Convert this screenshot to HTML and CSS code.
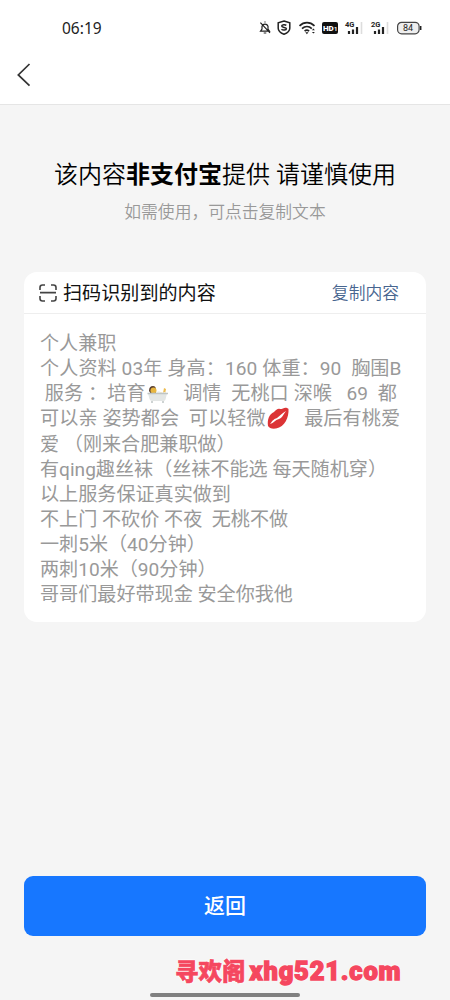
FILE: index.html
```html
<!DOCTYPE html>
<html lang="zh-CN">
<head>
<meta charset="utf-8">
<title>扫码识别</title>
<link rel="stylesheet" href="styles.css">
</head>
<body>
<div class="screen">
  <header class="top">
    <div class="status">
      <span class="clock">06:19</span>
      <svg class="status-icons" width="166" height="20" viewBox="0 0 166 20" fill="none" stroke="#222">
        <path d="M2.500 13.200h9L10 11V8.200a3.200 3.200 0 0 0-6 0V11zM7 4.600V3.600M5.700 15h2.600M2.400 4.600l9.600 10.200" stroke-width="1.200"/>
        <path d="M26 3l5.800 1.800v5.400c0 3-2.600 4.800-5.800 6c-3.200-1.200-5.800-3-5.800-6V4.800z" stroke-width="1.500"/>
        <path d="M28.300 7.400c-1-1-4.600-.9-4.600.7c0 1.900 4.700.8 4.700 2.700c0 1.600-3.700 1.700-4.900.5" stroke-width="1.500"/>
        <path d="M41.500 7.800c4.500-4.200 10.500-4.200 15 0M44 10.600c3-2.800 7-2.800 9.800 0M46.600 13.200c1.500-1.300 3-1.300 4.500 0" stroke-width="1.700"/>
        <path d="M48.900 16.200l-1.600-2h3.200zM53.900 12.300l1.500-1.700 1.500 1.700zM53.900 13.900l1.500 1.700 1.500-1.700z" fill="#222" stroke="none"/>
        <rect x="64" y="4" width="16" height="12" rx="2" fill="#111" stroke="none"/>
        <text class="hd" x="65" y="13">HD</text><text class="hd-sub" x="76" y="13">1</text>
        <text class="net" x="87" y="9">4G</text>
        <path d="M91 13v3M95 11.500V16M99 9v7" stroke-width="2.200"/>
        <path d="M103.500 4v12" stroke="#ddd" stroke-width="1.600"/>
        <text class="net" x="113" y="9">2G</text>
        <path d="M117 13v3M121 11.500V16M125 9v7" stroke-width="2.200"/>
        <path d="M129.500 4v12" stroke="#ddd" stroke-width="1.600"/>
        <rect x="139.600" y="4.300" width="21.500" height="11.500" rx="4" fill="#eee" stroke="#444" stroke-width="1.200"/>
        <path d="M162.700 8v4" stroke-width="1.500"/>
        <text class="battery" x="145" y="13">84</text>
      </svg>
    </div>
    <div class="nav">
      <svg width="16" height="26" viewBox="0 0 16 26" fill="none" stroke="#333" stroke-width="1.700"><path d="M14.500 2L3.300 12.900L14.500 23.600"/></svg>
    </div>
  </header>
  <main class="content">
    <h1 class="title">该内容<b>非支付宝</b>提供 请谨慎使用</h1>
    <p class="subtitle">如需使用，可点击复制文本</p>
    <section class="card">
      <div class="card-head">
        <svg class="scan" width="18" height="18" viewBox="0 0 18 18" fill="none" stroke="#444" stroke-width="1.600"><path d="M1 6V3.500Q1 1 3.500 1H6M12 1h2.500Q17 1 17 3.500V6M17 12v2.500Q17 17 14.500 17H12M6 17H3.500Q1 17 1 14.500V12M1 8.600h16"/></svg>
        <h2 class="card-title">扫码识别到的内容</h2>
        <a class="copy">复制内容</a>
      </div>
      <div class="card-body">
        <p>个人兼职</p>
        <p class="wide">个人资料 03年 身高：160 体重：90  胸围B</p>
        <p class="wide"> 服务 ：培育<svg class="emoji" width="23" height="20" viewBox="0 0 23 20"><path d="M3 7q0-5 4-5q3 0 3 4v4H5z" fill="#5b4030"/><circle cx="7.500" cy="6.500" r="3" fill="#e7b53e"/><path d="M9 10l3-2 5 1 1-5 2 1-1 5z" fill="#edbc50"/><path d="M10 9q3-4 5 0l4-1v3h-9z" fill="#eef1f1"/><path d="M2 9.500h19l-1.500 6Q19 17 17 17H6q-2 0-2.500-2z" fill="#e3e6e5"/><path d="M1.500 9.500H22M5 18h2M16 18h2" stroke="#bfc5c5" stroke-width="1.300"/></svg>   调情  无桃口 深喉   69  都</p>
        <p class="wide">可以亲 姿势都会  可以轻微<svg class="emoji" width="24" height="22" viewBox="0 0 24 22"><path d="M2 19C1 13 3 7 8 5c2-2 4-4 6-3c1 0 2 0 3-.5C19 0 22 1 22.500 2C23 10 19 20 10 21.500C6 22 3 21 2 19z" fill="#dc3436"/><path d="M4 17c3-4 4-5 7-6c3-2 5-5 9-7c-3 4-4 7-7 8c-4 1-5 4-9 5z" fill="#fff"/></svg>   最后有桃爱</p>
        <p>爱 （刚来合肥兼职做）</p>
        <p>有qing趣丝袜（丝袜不能选 每天随机穿）</p>
        <p>以上服务保证真实做到</p>
        <p>不上门 不砍价 不夜  无桃不做</p>
        <p>一刺5米（40分钟）</p>
        <p>两刺10米（90分钟）</p>
        <p>哥哥们最好带现金 安全你我他</p>
      </div>
    </section>
  </main>
  <footer class="bottom">
    <button class="back">返回</button>
    <div class="mark"><span class="mark-cn">寻欢阁</span><span class="mark-url">xhg521.com</span></div>
    <div class="home-bar"></div>
  </footer>
</div>
</body>
</html>
```
FILE: styles.css
```css
* { box-sizing: border-box; }
body { margin: 0; font-family: Roboto, "Noto Sans CJK SC", sans-serif; }
h1, h2, p { margin: 0; font-weight: 400; }
svg { display: block; flex: none; }

.screen { display: flex; flex-direction: column; width: 450px; height: 1000px; background: #f5f5f5; overflow: hidden; }

.top { height: 105px; background: #fff; border-bottom: 1px solid #e5e5e5; }
.status { display: flex; justify-content: space-between; align-items: center; height: 56px; padding: 0 26px 0 62px; }
.clock { font: 400 15.500px/20px "Noto Sans", sans-serif; color: #222; }
.status-icons { font-family: Roboto, sans-serif; }
.status-icons text { stroke: none; fill: #222; }
.status-icons .hd { font-size: 8px; font-weight: 900; fill: #fff; }
.status-icons .hd-sub { font-size: 6px; font-weight: 700; fill: #fff; }
.net { font-size: 7.500px; font-weight: 700; }
.battery { font-size: 9px; }
.nav { padding: 6px 0 0 15px; }

.content { flex: 1; padding: 52px 24px 0; }
.title { font-size: 24px; font-weight: 350; line-height: 36px; text-align: center; color: #000; white-space: nowrap; }
.title b { font-weight: 700; }
.subtitle { margin-top: 7px; font-size: 16.800px; font-weight: 350; line-height: 24px; text-align: center; color: #999; }

.card { margin-top: 48px; height: 350px; background: #fff; border-radius: 13px; }
.card-head { display: flex; align-items: center; height: 42px; padding: 0 27px 0 15px; border-bottom: 1px solid #eee; }
.card-title { margin: 2px 0 0 6px; font-size: 19.100px; line-height: 28px; color: #111; }
.copy { margin-left: auto; font-size: 16.800px; font-weight: 350; line-height: 24px; color: #47658f; }
.card-body { padding: 17px 0 0 16px; font-size: 19.100px; line-height: 25.150px; color: #999; }
.card-body p { height: 25.150px; white-space: pre; }
.card-body .wide { letter-spacing: 0.100px; }
.emoji { display: inline-block; vertical-align: -4px; }
.scan { width: 18px; }

.bottom { display: flex; flex-direction: column; height: 124px; padding: 0 24px; }
.back { height: 60px; padding: 0 0 3px; border: 0; border-radius: 9px; background: #1777ff; color: #fff; font: 500 21px/57px "Noto Sans CJK SC", sans-serif; }
.mark { display: flex; align-items: center; gap: 4px; height: 34px; margin: 18px 0 0 151px; color: #f5475f; text-shadow: 0 0 3px #fff, 0 0 3px #fff, 0 0 2px #fff; white-space: nowrap; }
.mark-cn { font: 900 23.500px/32px "Noto Sans CJK SC", sans-serif; padding-bottom: 3px; -webkit-text-stroke: 0.600px #f5475f; }
.mark-url { font: 900 25.500px/34px Roboto, sans-serif; letter-spacing: 0.800px; -webkit-text-stroke: 1.300px #f5475f; }
.home-bar { width: 150px; height: 4px; margin: 5px auto 0; border-radius: 2px; background: #808080; }
```
